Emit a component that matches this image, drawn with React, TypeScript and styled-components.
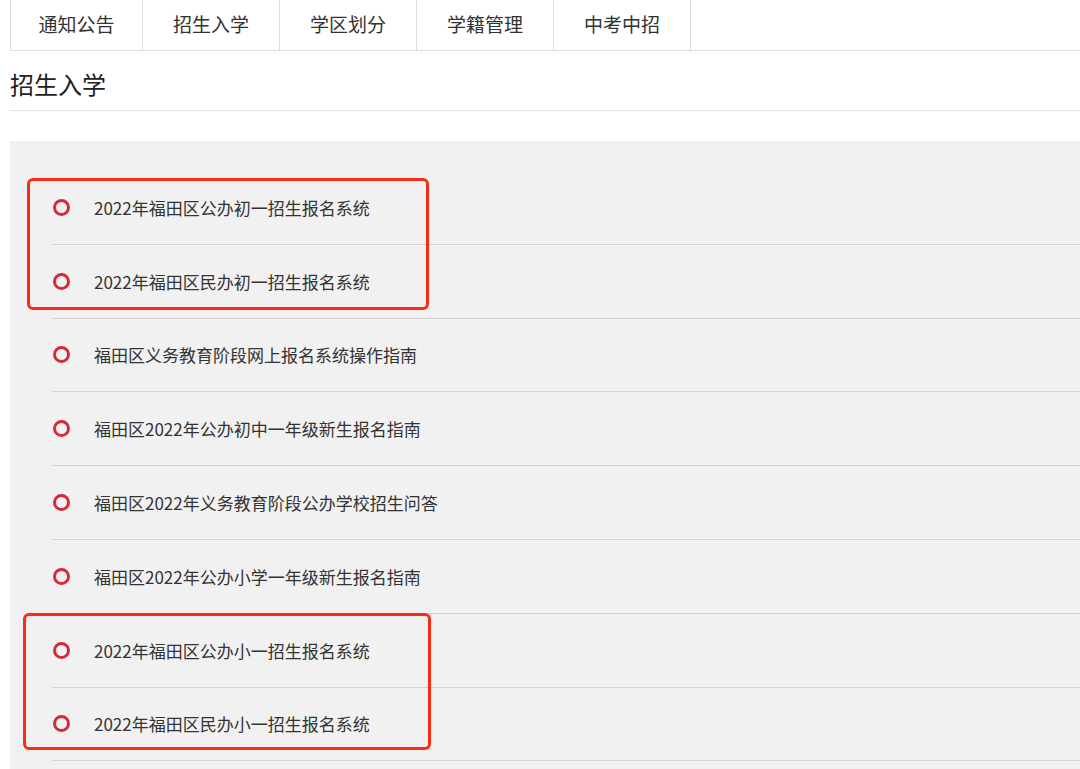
import styled, { createGlobalStyle } from "styled-components";

const GlobalStyle = createGlobalStyle`
  html, body {
    margin: 0;
    padding: 0;
    background: #ffffff;
    font-family: "Noto Sans CJK SC", "Noto Sans", "Liberation Sans", sans-serif;
    color: #333333;
  }
`;

const tabs = ["通知公告", "招生入学", "学区划分", "学籍管理", "中考中招"];

const items = [
  "2022年福田区公办初一招生报名系统",
  "2022年福田区民办初一招生报名系统",
  "福田区义务教育阶段网上报名系统操作指南",
  "福田区2022年公办初中一年级新生报名指南",
  "福田区2022年义务教育阶段公办学校招生问答",
  "福田区2022年公办小学一年级新生报名指南",
  "2022年福田区公办小一招生报名系统",
  "2022年福田区民办小一招生报名系统",
];

const Page = styled.div`
  padding-left: 10px;
  height: 769px;
  overflow: hidden;
`;

const TabBar = styled.div`
  display: flex;
  height: 51px;
  border-bottom: 1px solid #dedede;
  border-left: 1px solid #dedede;
  box-sizing: border-box;
`;

const Tab = styled.div<{ $first?: boolean }>`
  width: ${(p) => (p.$first ? 132 : 137)}px;
  display: flex;
  align-items: center;
  justify-content: center;
  border-right: 1px solid #dedede;
  box-sizing: border-box;
  font-size: 19px;
  color: #333;
  padding-bottom: 4px;
`;

const Heading = styled.h2`
  margin: 0;
  height: 60px;
  display: flex;
  align-items: center;
  font-size: 24px;
  font-weight: 400;
  color: #222;
  border-bottom: 1px solid #e3e3e3;
  box-sizing: border-box;
  padding-top: 5px;
`;

const Panel = styled.div`
  position: relative;
  margin-top: 30px;
  background: #f1f1f1;
  padding-top: 30px;
  padding-left: 42px;
  height: 700px;
  box-sizing: border-box;
`;

const List = styled.ul`
  list-style: none;
  margin: 0;
  padding: 0;
`;

const Row = styled.li`
  height: 73.8px;
  box-sizing: border-box;
  border-bottom: 1px solid #d3d3d3;
  display: flex;
  align-items: center;
  font-size: 17px;
  color: #333;
`;

const Dot = styled.span`
  width: 11px;
  height: 11px;
  border: 3px solid #d42a3c;
  border-radius: 50%;
  margin-left: 1px;
  margin-right: 24px;
  flex-shrink: 0;
`;

const Highlight = styled.div<{ $top: number; $left: number; $w: number; $h: number }>`
  position: absolute;
  top: ${(p) => p.$top}px;
  left: ${(p) => p.$left}px;
  width: ${(p) => p.$w}px;
  height: ${(p) => p.$h}px;
  border: 3px solid #fb2a14;
  border-radius: 6px;
  box-sizing: border-box;
  pointer-events: none;
`;

export default function App() {
  return (
    <Page>
      <GlobalStyle />
      <TabBar>
        {tabs.map((t, i) => (
          <Tab key={t} $first={i === 0}>
            {t}
          </Tab>
        ))}
      </TabBar>
      <Heading>招生入学</Heading>
      <Panel>
        <List>
          {items.map((it) => (
            <Row key={it}>
              <Dot />
              {it}
            </Row>
          ))}
        </List>
        <Highlight $top={37} $left={17} $w={402} $h={132} />
        <Highlight $top={472} $left={13} $w={408} $h={137} />
      </Panel>
    </Page>
  );
}
